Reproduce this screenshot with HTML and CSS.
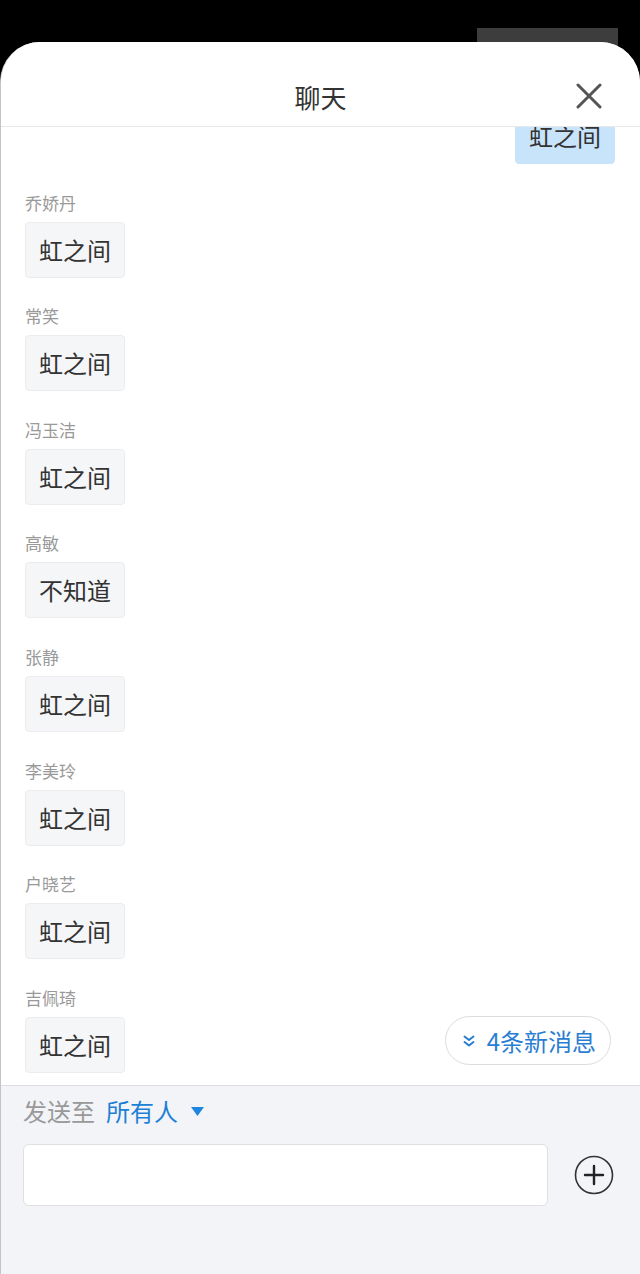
FILE: index.html
```html
<!DOCTYPE html>
<html lang="zh-CN">
<head>
    <meta charset="UTF-8">
    <title>聊天</title>
    <link rel="stylesheet" href="styles.css">
</head>
<body>
    <div id="screen">
        <!-- Status strip behind the sheet -->
        <div id="topbar">
            <div class="topbar-tab"></div>
        </div>

        <!-- Chat sheet -->
        <div id="sheet">
            <div id="header">
                <span class="title">聊天</span>
                <svg class="close" width="26" height="26" viewBox="0 0 26 26">
                    <path d="M2 2 L24 24 M24 2 L2 24" stroke="#555" stroke-width="3" stroke-linecap="round"/>
                </svg>
            </div>

            <div id="messages">
                <div class="list">
                    <div class="msg mine">
                        <div class="bubble">虹之间</div>
                    </div>
                    <div class="msg">
                        <div class="name">乔娇丹</div>
                        <div class="bubble">虹之间</div>
                    </div>
                    <div class="msg">
                        <div class="name">常笑</div>
                        <div class="bubble">虹之间</div>
                    </div>
                    <div class="msg">
                        <div class="name">冯玉洁</div>
                        <div class="bubble">虹之间</div>
                    </div>
                    <div class="msg">
                        <div class="name">高敏</div>
                        <div class="bubble">不知道</div>
                    </div>
                    <div class="msg">
                        <div class="name">张静</div>
                        <div class="bubble">虹之间</div>
                    </div>
                    <div class="msg">
                        <div class="name">李美玲</div>
                        <div class="bubble">虹之间</div>
                    </div>
                    <div class="msg">
                        <div class="name">户晓艺</div>
                        <div class="bubble">虹之间</div>
                    </div>
                    <div class="msg">
                        <div class="name">吉佩琦</div>
                        <div class="bubble">虹之间</div>
                    </div>
                </div>

                <!-- New messages pill -->
                <div class="new-pill">
                    <svg width="12" height="12" viewBox="0 0 12 12">
                        <path d="M1.5 1.5 L6 5 L10.5 1.5 M1.5 7 L6 10.5 L10.5 7" fill="none" stroke="#2a7ed2" stroke-width="2" stroke-linecap="round" stroke-linejoin="round"/>
                    </svg>
                    <span>4条新消息</span>
                </div>
            </div>

            <div id="footer">
                <div class="send-to">
                    <span class="label">发送至</span>
                    <span class="target">所有人</span>
                    <svg width="13" height="9" viewBox="0 0 13 9">
                        <path d="M0 0 L13 0 L6.5 9 Z" fill="#1e86e0"/>
                    </svg>
                </div>
                <div class="compose">
                    <div class="input"></div>
                    <svg class="plus" width="40" height="40" viewBox="0 0 40 40">
                        <circle cx="20" cy="20" r="18.5" fill="none" stroke="#333" stroke-width="1.6"/>
                        <path d="M20 11 V29 M11 20 H29" stroke="#222" stroke-width="2.4" stroke-linecap="round"/>
                    </svg>
                </div>
            </div>
        </div>
    </div>
</body>
</html>
```

FILE: styles.css
```css
/* Global Styles */
body {
    margin: 0;
    font-family: "Noto Sans CJK SC", "Noto Sans", sans-serif;
    background-color: #000000;
}

/* Screen */
#screen {
    display: flex;
    flex-direction: column;
    height: 1274px;
    overflow: hidden;
}

/* Top strip */
#topbar {
    height: 42px;
    display: flex;
    justify-content: flex-end;
    align-items: flex-end;
    flex-shrink: 0;
}

.topbar-tab {
    width: 141px;
    height: 54px;
    margin-right: 22px;
    margin-bottom: -40px;
    background-color: #3d3d3d;
}

/* Sheet */
#sheet {
    position: relative;
    flex: 1;
    display: flex;
    flex-direction: column;
    background-color: #ffffff;
    border-radius: 40px 40px 0 0;
    border-left: 1px solid #c4c4c4;
    overflow: hidden;
}

#header {
    height: 84px;
    flex-shrink: 0;
    display: flex;
    justify-content: center;
    align-items: center;
    border-bottom: 1px solid #e8e8e8;
    position: relative;
    z-index: 2;
    background-color: #ffffff;
}

#header .title {
    font-size: 26px;
    color: #333333;
    padding-top: 25px;
}

#header .close {
    position: absolute;
    right: 38px;
    top: 41px;
}

/* Messages */
#messages {
    flex: 1;
    position: relative;
    overflow: hidden;
}

.list {
    margin-top: -19px;
    padding: 0 25px 0 24px;
}

.msg {
    display: flex;
    flex-direction: column;
    align-items: flex-start;
    margin-bottom: 26.6px;
}

.msg.mine {
    align-items: flex-end;
}

.name {
    font-size: 17px;
    line-height: 24px;
    color: #999999;
    margin-bottom: 7px;
}

.bubble {
    height: 56px;
    box-sizing: border-box;
    padding: 0 13px;
    font-size: 24px;
    line-height: 54px;
    color: #333333;
    background-color: #f5f6f8;
    border: 1px solid #ececef;
    border-radius: 4px;
}

.msg.mine .bubble {
    background-color: #c8e4fb;
    border-color: #c8e4fb;
}

.new-pill {
    position: absolute;
    right: 29px;
    bottom: 20px;
    height: 49px;
    box-sizing: border-box;
    padding: 0 14px 0 17px;
    display: flex;
    align-items: center;
    gap: 12px;
    background-color: #ffffff;
    border: 1px solid #dcdcdc;
    border-radius: 25px;
    font-size: 24px;
    color: #2a7ed2;
}

/* Footer */
#footer {
    height: 189px;
    flex-shrink: 0;
    background-color: #f2f4f8;
    border-top: 1px solid #dedede;
    padding: 9px 22px 0 22px;
    box-sizing: border-box;
}

.send-to {
    display: flex;
    align-items: center;
    font-size: 24px;
    line-height: 32px;
}

.send-to .label {
    color: #999999;
    margin-right: 11px;
}

.send-to .target {
    color: #1e7fd6;
    margin-right: 13px;
}

.compose {
    display: flex;
    align-items: center;
    margin-top: 17px;
}

.compose .input {
    width: 525px;
    height: 62px;
    box-sizing: border-box;
    background-color: #ffffff;
    border: 1px solid #e0e0e0;
    border-radius: 6px;
}

.compose .plus {
    margin-left: 26px;
}
```
